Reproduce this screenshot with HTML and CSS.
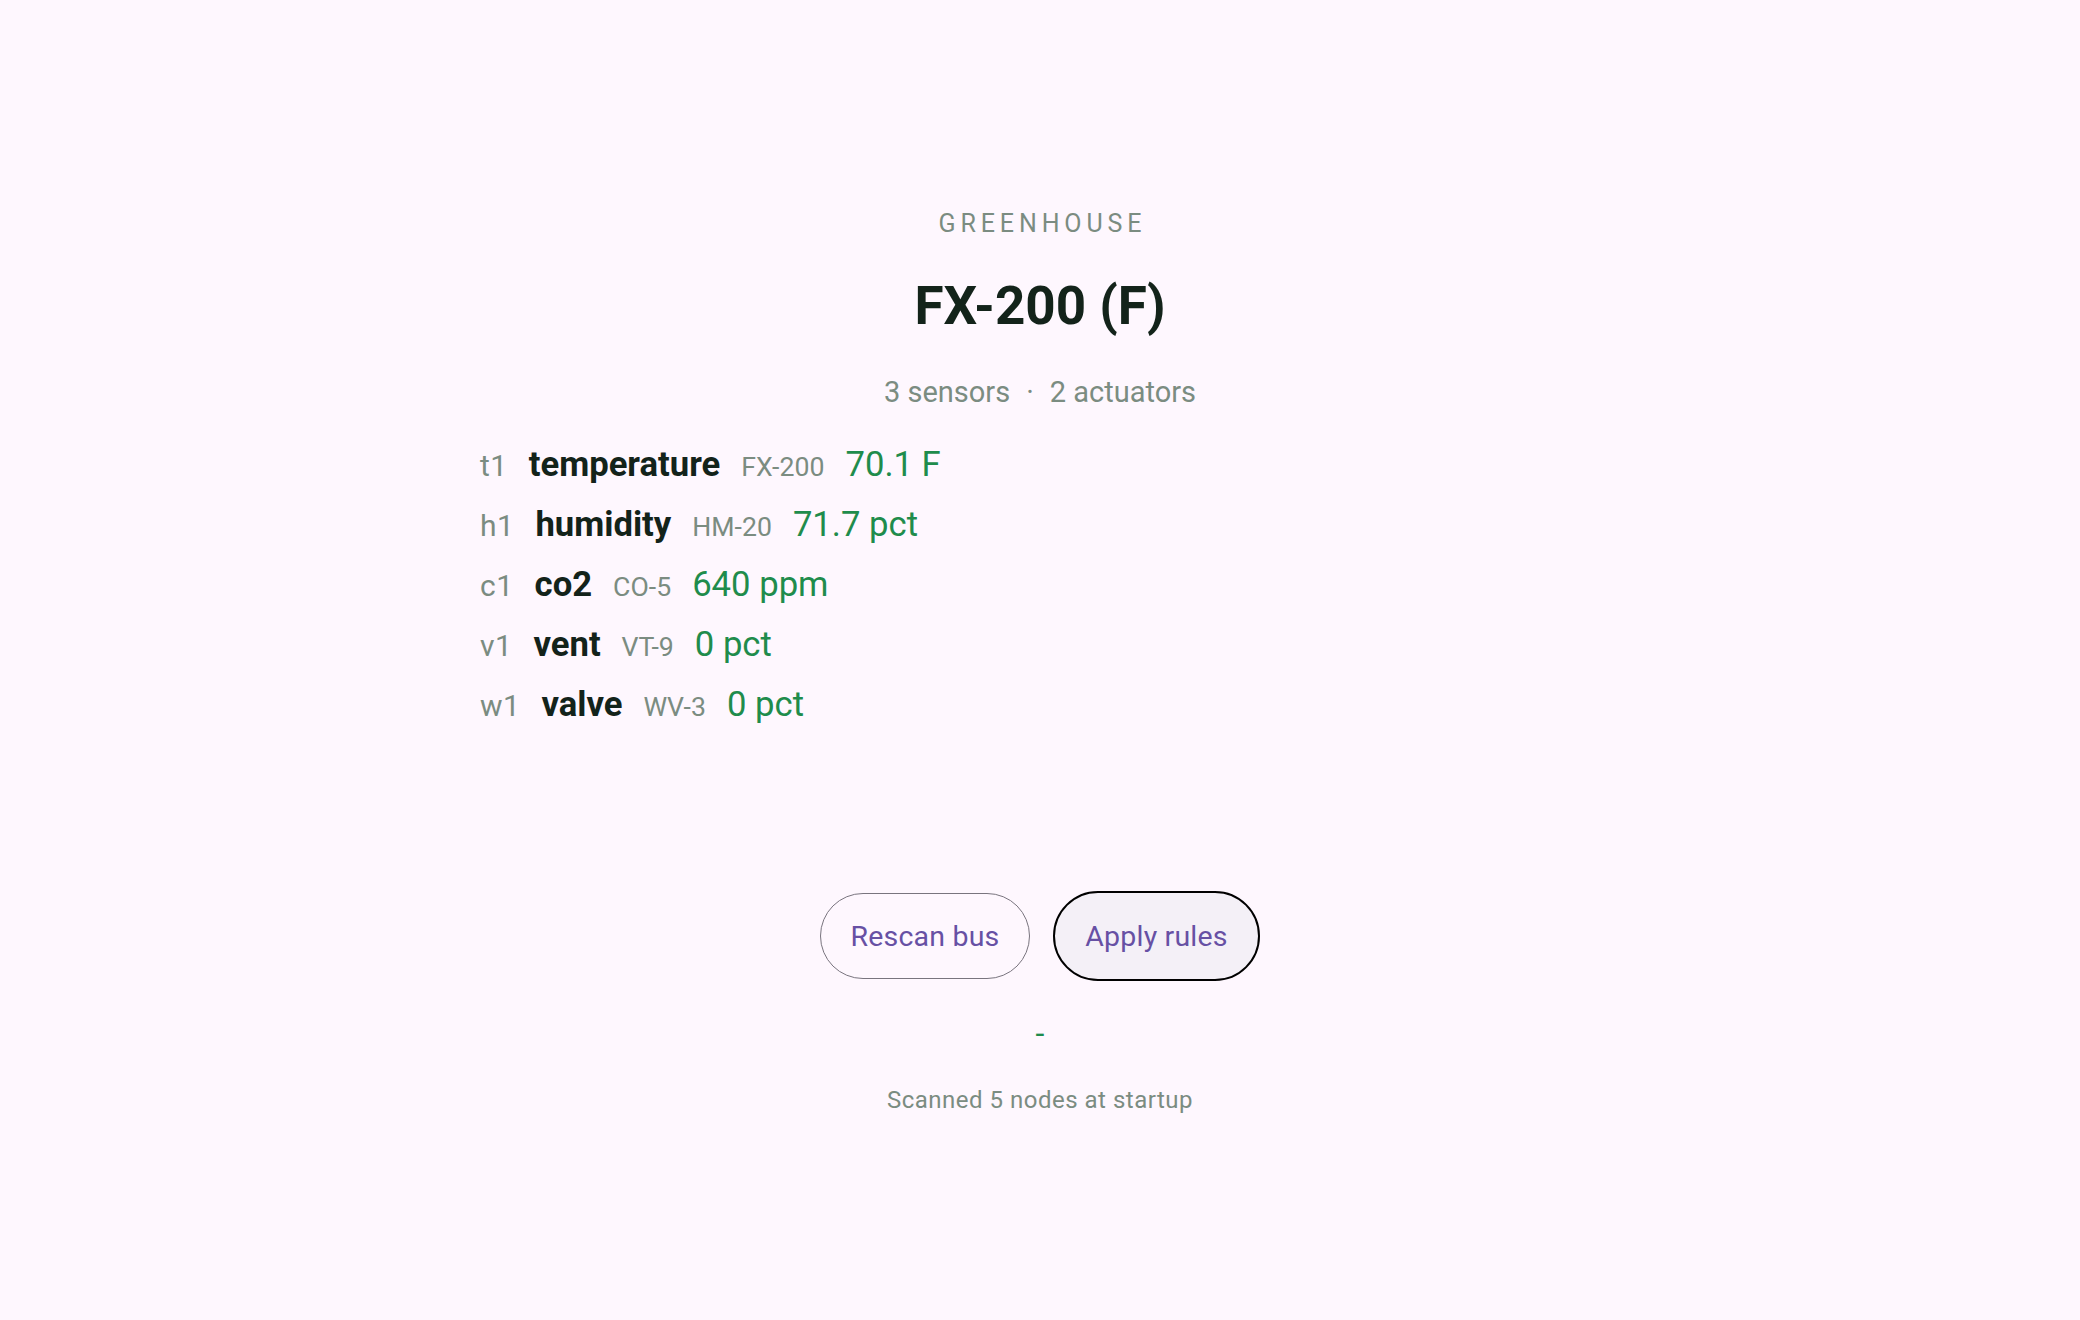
FILE: index.html
```html
<!DOCTYPE html>
<html lang="en">
<head>
<meta charset="utf-8">
<title>Greenhouse</title>
<link rel="stylesheet" href="styles.css">
</head>
<body>
<main class="page">
  <div class="eyebrow">GREENHOUSE</div>
  <h1 class="title">FX-200 (F)</h1>
  <div class="summary"><span>3 sensors</span><span class="dot">·</span><span>2 actuators</span></div>
  <ul class="nodes">
    <li class="node"><span class="id">t1</span><span class="name">temperature</span><span class="model">FX-200</span><span class="value">70.1 F</span></li>
    <li class="node"><span class="id">h1</span><span class="name">humidity</span><span class="model">HM-20</span><span class="value">71.7 pct</span></li>
    <li class="node"><span class="id">c1</span><span class="name">co2</span><span class="model">CO-5</span><span class="value">640 ppm</span></li>
    <li class="node"><span class="id">v1</span><span class="name">vent</span><span class="model">VT-9</span><span class="value">0 pct</span></li>
    <li class="node"><span class="id">w1</span><span class="name">valve</span><span class="model">WV-3</span><span class="value">0 pct</span></li>
  </ul>
  <div class="actions">
    <button class="btn">Rescan bus</button>
    <button class="btn btn-focused">Apply rules</button>
  </div>
  <div class="status">-</div>
  <div class="note">Scanned 5 nodes at startup</div>
</main>
</body>
</html>
```

FILE: styles.css
```css
html, body {
  margin: 0;
  padding: 0;
  background: #fef7fe;
}

body {
  font-family: Roboto, "Noto Sans", "Liberation Sans", sans-serif;
  color: #13231a;
}

.page {
  width: 1120px;
  margin: 0 auto;
  padding-top: 208px;
  display: flex;
  flex-direction: column;
}

.eyebrow {
  text-align: center;
  font-size: 25px;
  line-height: 32px;
  font-weight: 400;
  letter-spacing: 4.9px;
  text-indent: 4.9px;
  color: #7b8c81;
}

.title {
  margin: 34px 0 0;
  text-align: center;
  font-size: 53px;
  line-height: 64px;
  font-weight: 700;
  color: #13231a;
}

.summary {
  margin-top: 36px;
  display: flex;
  justify-content: center;
  gap: 16px;
  font-size: 29px;
  line-height: 36px;
  color: #7b8c81;
}

.nodes {
  list-style: none;
  margin: 34px 0 0;
  padding: 0;
}

.node {
  height: 60px;
  display: flex;
  align-items: baseline;
  gap: 21px;
}

.id {
  font-size: 30px;
  letter-spacing: 0.5px;
  color: #7b8c81;
}

.name {
  font-size: 34.67px;
  font-weight: 700;
  color: #13231a;
}

.model {
  font-size: 26.67px;
  color: #7b8c81;
}

.value {
  font-size: 34.67px;
  color: #1f8c4c;
}

.actions {
  margin-top: 147px;
  display: flex;
  justify-content: center;
  align-items: center;
  gap: 23px;
  height: 90px;
}

.btn {
  font-family: Roboto, "Noto Sans", "Liberation Sans", sans-serif;
  font-size: 28.5px;
  font-weight: 400;
  letter-spacing: 0.2px;
  color: #6750a4;
  background: transparent;
  border: 1.4px solid #79747e;
  border-radius: 43px;
  height: 86px;
  width: 210px;
  padding: 0;
  box-sizing: border-box;
  cursor: pointer;
}

.btn-focused {
  height: 90px;
  width: 207px;
  border: 2.7px solid #000;
  border-radius: 45px;
  background: #f4f0f7;
}

.status {
  margin-top: 36px;
  text-align: center;
  font-size: 32px;
  line-height: 32px;
  color: #1f8c4c;
}

.note {
  margin-top: 35px;
  text-align: center;
  font-size: 24px;
  line-height: 32px;
  letter-spacing: 0.5px;
  color: #7b8c81;
}
```
